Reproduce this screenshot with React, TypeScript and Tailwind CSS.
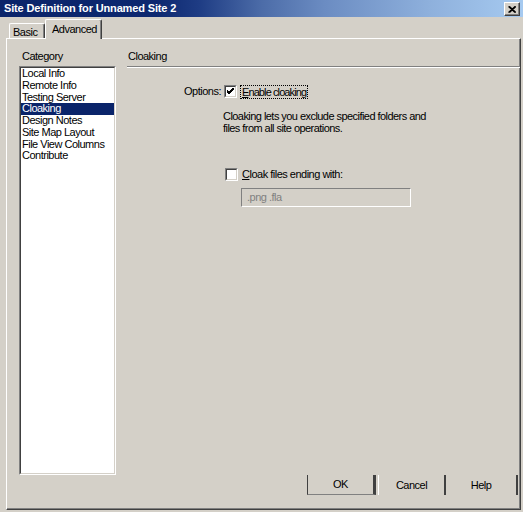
import React from "react";

function CheckBox({ checked }: { checked?: boolean }) {
  return (
    <div className="w-[13px] h-[13px] shrink-0 border border-t-[#808080] border-l-[#808080] border-b-white border-r-white">
      <div className="w-full h-full border border-t-[#404040] border-l-[#404040] border-b-[#d4d0c8] border-r-[#d4d0c8] bg-white flex items-center justify-center">
        {checked && (
          <svg width="9" height="9" viewBox="0 0 9 9" className="block">
            <path d="M1 3.5 L3 5.5 L7.5 1 M1 4.5 L3 6.5 L7.5 2" stroke="#000" strokeWidth="1" fill="none" shapeRendering="crispEdges" />
          </svg>
        )}
      </div>
    </div>
  );
}

const items = [
  "Local Info",
  "Remote Info",
  "Testing Server",
  "Cloaking",
  "Design Notes",
  "Site Map Layout",
  "File View Columns",
  "Contribute",
];

export default function App() {
  return (
    <div className="w-[523px] h-[512px] bg-[#d4d0c8] overflow-hidden flex flex-col font-['Liberation_Sans',Arial,sans-serif] text-[11px] tracking-[-0.5px] text-black">
      {/* Title bar */}
      <div className="h-[17px] shrink-0 flex items-start justify-between bg-[linear-gradient(to_right,#0a246a_0%,#0d2870_30%,#1e3c84_38%,#4c6ca8_50%,#6b8cc2_62%,#8eb0dc_82%,#a6caf0_100%)]">
        <div className="pl-[4px] leading-[17px] text-white font-bold tracking-[-0.15px] text-[11px]">
          Site Definition for Unnamed Site 2
        </div>
        <div className="mt-[2px] mr-[3px] w-[16px] h-[14px] bg-[#d4d0c8] border border-t-white border-l-white border-b-[#404040] border-r-[#404040] shadow-[inset_-1px_-1px_0_#808080] flex items-center justify-center">
          <svg width="8" height="7" viewBox="0 0 8 7" className="block">
            <path d="M0.5 0.5 L7 6.5 M7 0.5 L0.5 6.5 M1.5 0.5 L8 6.5 M8 0.5 L1.5 6.5" stroke="#000" strokeWidth="1.1" fill="none" />
          </svg>
        </div>
      </div>

      {/* Tabs */}
      <div className="h-[21px] shrink-0 flex items-end pl-[9px]">
        <div className="w-[36px] h-[15px] border-l border-t border-r border-l-white border-t-white border-r-[#404040] rounded-t-[2px] shadow-[inset_-1px_0_0_#808080] flex items-center pl-[3px] pt-[2px]">
          Basic
        </div>
        <div className="relative z-10 -mb-[1px] w-[57px] h-[20px] bg-[#d4d0c8] border-l border-t border-r border-l-white border-t-white border-r-[#404040] rounded-t-[2px] shadow-[inset_-1px_0_0_#808080] flex items-center pl-[6px] pb-[1px]">
          Advanced
        </div>
      </div>

      {/* Panel */}
      <div className="ml-[6px] w-[515px] h-[472px] shrink-0 border border-t-white border-l-white border-r-[#404040] border-b-[#404040] shadow-[inset_-1px_-1px_0_#808080] flex flex-col">
        <div className="flex">
          {/* Left column */}
          <div className="ml-[12px] w-[97px] flex flex-col">
            <div className="mt-[11px] h-[13px] leading-[13px] pl-[3px]">Category</div>
            <div className="mt-[3px] h-[409px] border border-t-[#808080] border-l-[#808080] border-b-white border-r-white">
              <div className="w-full h-full border border-t-[#404040] border-l-[#404040] border-b-[#d4d0c8] border-r-[#d4d0c8] bg-white overflow-hidden">
                {items.map((it) => (
                  <div
                    key={it}
                    className={
                      it === "Cloaking"
                        ? "h-[11.75px] leading-[11.75px] pl-[1px] whitespace-nowrap bg-[#0a246a] text-white"
                        : "h-[11.75px] leading-[11.75px] pl-[1px] whitespace-nowrap"
                    }
                  >
                    {it}
                  </div>
                ))}
              </div>
            </div>
          </div>

          {/* Right column */}
          <div className="ml-[11px] flex-1 flex flex-col">
            <div className="mt-[11px] h-[13px] leading-[13px] pl-[1px]">Cloaking</div>
            <div className="mt-[3px] h-[2px] border-t border-b border-t-[#808080] border-b-white" />
            <div className="mt-[17px] h-[13px] flex items-center">
              <div className="w-[94px] text-right whitespace-nowrap">Options:</div>
              <div className="ml-[3px]">
                <CheckBox checked />
              </div>
              <div className="ml-[3px] h-[14px] px-[1px] border border-dotted border-black leading-[12px] whitespace-nowrap tracking-[-0.9px]">
                <span className="underline">E</span>nable cloaking
              </div>
            </div>
            <div className="mt-[12px] pl-[96px] leading-[12px] whitespace-nowrap tracking-[-0.55px]">
              Cloaking lets you exclude specified folders and
              <br />
              files from all site operations.
            </div>
            <div className="mt-[34px] pl-[98px] h-[13px] flex items-center">
              <CheckBox />
              <div className="ml-[4px] whitespace-nowrap">
                <span className="underline">C</span>loak files ending with:
              </div>
            </div>
            <div className="mt-[7px] ml-[114px] w-[170px] h-[19px] border border-t-[#808080] border-l-[#808080] border-b-white border-r-white flex items-center pl-[5px] text-[#808080]">
              .png .fla
            </div>
          </div>
        </div>

        {/* Buttons */}
        <div className="mt-auto mb-[14px] flex justify-end pr-[2px]">
          <div className="w-[69px] h-[20px] border-l border-b border-r-[3px] border-l-[#404040] border-b-[#808080] border-r-[#404040] flex items-center justify-center">
            OK
          </div>
          <div className="ml-[2px] w-[68px] h-[20px] border-l border-r-2 border-l-white border-r-[#404040] flex items-center justify-center">
            Cancel
          </div>
          <div className="w-[72px] h-[20px] border-r-2 border-r-[#404040] flex items-center justify-center">
            Help
          </div>
        </div>
      </div>
    </div>
  );
}
